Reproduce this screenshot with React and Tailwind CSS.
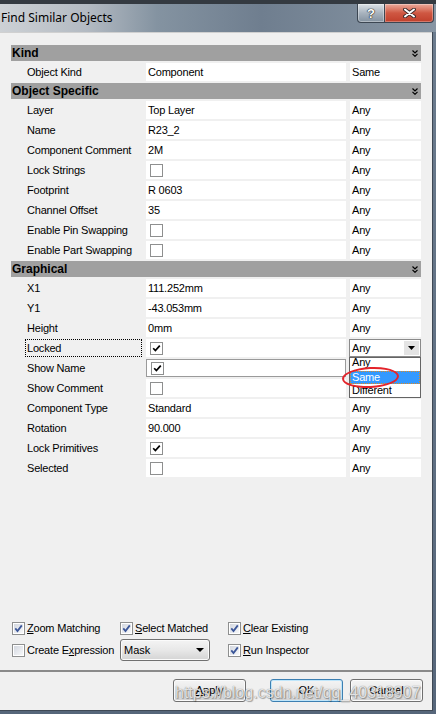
import React from 'react';

const sans = "font-['Liberation_Sans',Arial,sans-serif]";

const sections = [
  { title: 'Kind', rows: [{ label: 'Object Kind', value: 'Component', match: 'Same' }] },
  {
    title: 'Object Specific',
    rows: [
      { label: 'Layer', value: 'Top Layer' },
      { label: 'Name', value: 'R23_2' },
      { label: 'Component Comment', value: '2M' },
      { label: 'Lock Strings', check: false },
      { label: 'Footprint', value: 'R 0603' },
      { label: 'Channel Offset', value: '35' },
      { label: 'Enable Pin Swapping', check: false },
      { label: 'Enable Part Swapping', check: false },
    ],
  },
  {
    title: 'Graphical',
    rows: [
      { label: 'X1', value: '111.252mm' },
      { label: 'Y1', value: '-43.053mm' },
      { label: 'Height', value: '0mm' },
      { label: 'Locked', check: true, focused: true, combo: true },
      { label: 'Show Name', check: true, editing: true },
      { label: 'Show Comment', check: false },
      { label: 'Component Type', value: 'Standard' },
      { label: 'Rotation', value: '90.000' },
      { label: 'Lock Primitives', check: true },
      { label: 'Selected', check: false },
    ],
  },
];

function Chevrons() {
  return (
    <svg width="6" height="7" viewBox="0 0 6 7" className="shrink-0">
      <path d="M0.5 0.5 L3 3 L5.5 0.5 M0.5 3.8 L3 6.3 L5.5 3.8" fill="none" stroke="#000" strokeWidth="1.2" />
    </svg>
  );
}

function DownTriangle({ w = 7, h = 4 }) {
  return (
    <svg width={w} height={h} viewBox={`0 0 ${w} ${h}`}>
      <path d={`M0 0 L${w} 0 L${w / 2} ${h} Z`} fill="#000" />
    </svg>
  );
}

function GridCheck({ checked }) {
  return (
    <span className="ml-[2px] flex h-[13px] w-[13px] items-center justify-center border border-[#8e8f8f] bg-white">
      {checked && (
        <svg width="9" height="9" viewBox="0 0 9 9">
          <path d="M1.2 4.2 L3.4 6.6 L7.8 1.6" fill="none" stroke="#000" strokeWidth="1.7" />
        </svg>
      )}
    </span>
  );
}

function WinCheck({ checked }) {
  return (
    <span className="flex h-[13px] w-[13px] shrink-0 items-center justify-center border border-[#8e8f8f] bg-white p-[1px]">
      <span className="flex h-full w-full items-center justify-center bg-linear-to-br from-[#d4d8e0] to-[#f7f8fa]">
        {checked && (
          <svg width="9" height="9" viewBox="0 0 9 9">
            <path d="M1.3 4.4 L3.5 7 L7.8 1.4" fill="none" stroke="#3b5698" strokeWidth="1.8" />
          </svg>
        )}
      </span>
    </span>
  );
}

function CheckItem({ checked, pre, mn, post }) {
  return (
    <div className="flex w-[108px] items-center gap-[2px]">
      <WinCheck checked={checked} />
      <span className="whitespace-nowrap text-[11px] tracking-[-0.2px] text-black">
        {pre}
        <span className="underline underline-offset-[1px]">{mn}</span>
        {post}
      </span>
    </div>
  );
}

function WinButton({ children, isDefault }) {
  return (
    <div
      className={`flex h-[23px] w-[73px] items-center justify-center rounded-[3px] border bg-linear-to-b from-[#f4f4f4] via-[#e8e8e8] to-[#d2d2d2] text-[11px] text-black ${
        isDefault ? 'border-[#3c7fb1] shadow-[inset_0_0_0_1px_#bfe6fb]' : 'border-[#707070] shadow-[inset_0_0_0_1px_#fbfbfb]'
      }`}
    >
      {children}
    </div>
  );
}

function DropList() {
  return (
    <div className="absolute left-[-1px] top-[17px] z-10 h-[41px] w-[72px] border border-[#646464] bg-white">
      <div className="h-[13px] overflow-hidden pl-[2px] text-[11px] leading-[9px]">Any</div>
      <div className="flex h-[13px] items-center border border-dotted border-[#e08a20] bg-[#3399ff] pl-[1px] text-[11px] text-white">
        Same
      </div>
      <div className="flex h-[13px] items-center pl-[2px] text-[11px]">Different</div>
      <div className="pointer-events-none absolute left-[-8px] top-[9px] h-[21px] w-[57px] -rotate-3 rounded-[50%] border-2 border-[#e3242b]" />
    </div>
  );
}

function Row({ row }) {
  return (
    <div className="mt-[2px] flex h-[18px] text-[11px] tracking-[-0.2px] text-black">
      <div className="flex w-[135px] pl-[14px] pr-[4px]">
        <span
          className={`flex h-full w-full items-center border pl-[1px] ${
            row.focused ? 'border-dotted border-black' : 'border-transparent'
          }`}
        >
          {row.label}
        </span>
      </div>
      <div
        className={`flex w-[200px] items-center bg-white pl-[2px] ${
          row.editing ? 'border border-[#9a9a9a]' : ''
        }`}
      >
        {row.check !== undefined ? <GridCheck checked={row.check} /> : <span>{row.value}</span>}
      </div>
      {row.combo ? (
        <div className="relative ml-[3px] flex w-[72px] items-center border border-[#8a8a8a] bg-white pl-[2px]">
          <span>Any</span>
          <span className="ml-auto mr-[1px] flex h-[14px] w-[15px] items-center justify-center bg-[#e4e4e4]">
            <DownTriangle />
          </span>
          <DropList />
        </div>
      ) : (
        <div className="ml-[4px] flex w-[71px] items-center bg-white pl-[2px]">{row.match || 'Any'}</div>
      )}
    </div>
  );
}

function Section({ section }) {
  return (
    <div>
      <div className="mt-[2px] flex h-[16px] items-center justify-between bg-[#a0a0a0] pl-[1px] pr-[3px] text-[12px] font-bold text-black">
        <span>{section.title}</span>
        <Chevrons />
      </div>
      {section.rows.map((row) => (
        <Row key={row.label} row={row} />
      ))}
    </div>
  );
}

export default function App() {
  return (
    <div className={`relative h-[714px] w-[436px] overflow-hidden bg-linear-to-b from-[#6d7d8f] to-[#56667a] ${sans}`}>
      {/* title bar */}
      <div className="flex h-[32px] items-start justify-between border-t-[4px] border-[#343a41] bg-[linear-gradient(90deg,#cdd1d5_0%,#b3bac2_20%,#8493a1_36%,#6f7e8f_60%,#8896a4_100%)] pr-[2px]">
        <span className="mt-[6px] pl-[1px] font-['Noto_Sans','Open_Sans',sans-serif] text-[12px] leading-[16px] text-black">
          Find Similar Objects
        </span>
        <div className="flex">
          <div className="flex h-[19px] w-[28px] items-center justify-center rounded-bl-[4px] border border-t-0 border-[#3c4652] bg-linear-to-b from-[#dde2e7] via-[#a8b3be] to-[#8492a0] shadow-[inset_0_0_0_1px_rgba(255,255,255,0.35)]">
            <span className="text-[13px] font-bold leading-none text-white [text-shadow:0_0_1px_#222,0_0_1px_#222,0_0_1px_#222]">?</span>
          </div>
          <div className="flex h-[19px] w-[49px] items-center justify-center rounded-br-[4px] border border-l-0 border-t-0 border-[#3c4652] bg-linear-to-b from-[#eaaa9c] via-[#cf5742] to-[#c03f2b] shadow-[inset_0_0_0_1px_rgba(255,255,255,0.3)]">
            <svg width="13" height="10" viewBox="0 0 13 10">
              <path d="M2 1.5 L11 8.5 M11 1.5 L2 8.5" stroke="#3a2a2a" strokeWidth="3.8" strokeLinecap="round" />
              <path d="M2 1.5 L11 8.5 M11 1.5 L2 8.5" stroke="#fff" strokeWidth="2" strokeLinecap="round" />
            </svg>
          </div>
        </div>
      </div>

      {/* client area */}
      <div className="flex h-[679px] w-[433px] flex-col border-b border-r border-[#3f4955] bg-[#f0f0f0]">
        <div className="flex h-[640px] flex-col border-b-2 border-t border-b-[#8a8a8a] border-t-[#d0d0d0] px-[11px] pt-[10px]">
          {sections.map((s) => (
            <Section key={s.title} section={s} />
          ))}

          <div className="-ml-[11px] mt-auto flex flex-col pb-[9px] pl-[12px]">
            <div className="flex h-[16px] items-center">
              <CheckItem checked pre="" mn="Z" post="oom Matching" />
              <CheckItem checked pre="" mn="S" post="elect Matched" />
              <CheckItem checked pre="" mn="C" post="lear Existing" />
            </div>
            <div className="mt-[3px] flex h-[22px] items-center">
              <CheckItem checked={false} pre="Create E" mn="x" post="pression" />
              <div className="mr-[18px] flex h-[22px] w-[90px] items-center justify-between rounded-[3px] border border-[#707070] bg-linear-to-b from-[#f4f4f4] via-[#e8e8e8] to-[#d4d4d4] pl-[3px] pr-[5px] text-[11px] text-black shadow-[inset_0_0_0_1px_#fbfbfb]">
                <span>Mask</span>
                <DownTriangle w={8} h={4} />
              </div>
              <CheckItem checked pre="" mn="R" post="un Inspector" />
            </div>
          </div>
        </div>

        <div className="flex justify-end gap-[7px] pr-[9px] pt-[7px]">
          <div className="mr-[17px]">
            <WinButton>
              <span className="underline underline-offset-[1px]">A</span>pply
            </WinButton>
          </div>
          <WinButton isDefault>OK</WinButton>
          <WinButton>Cancel</WinButton>
        </div>
      </div>

      {/* watermark */}
      <div className="pointer-events-none absolute left-[175px] top-[681px] whitespace-nowrap text-[16px] text-white/80 [text-shadow:0_0_1px_rgba(0,0,0,0.55),1px_1px_1px_rgba(0,0,0,0.3)]">
        https://blog.csdn.net/qq_40318907
      </div>
    </div>
  );
}
